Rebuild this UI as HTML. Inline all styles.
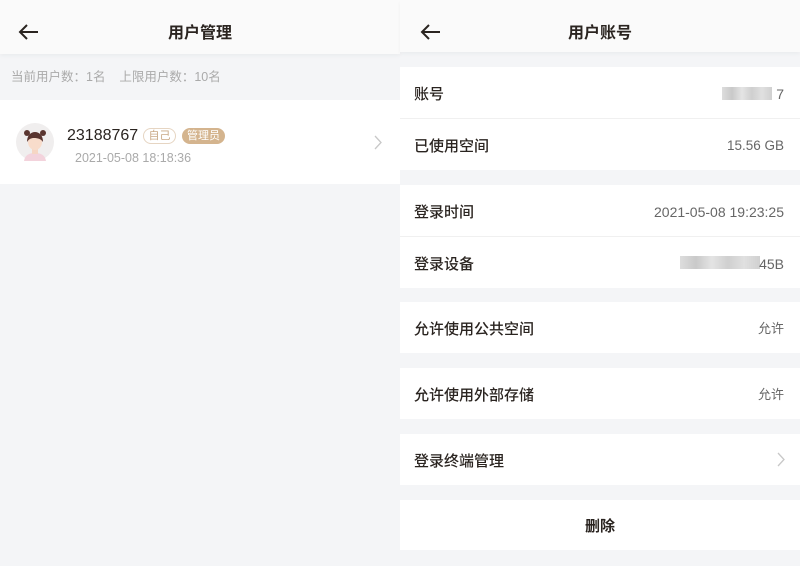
<!DOCTYPE html>
<html><head><meta charset="utf-8"><style>
*{margin:0;padding:0;box-sizing:border-box}
body{width:800px;height:566px;background:#f4f5f7;font-family:"Liberation Sans","Noto Sans CJK SC",sans-serif;position:relative;overflow:hidden;color:#2a2420}
.a{position:absolute;line-height:20px}
.w{position:absolute;background:#fff}
.t{position:absolute;font-size:15px;color:#2a2420;font-weight:500;line-height:20px}
.v{position:absolute;font-size:14px;color:#666;right:16px;line-height:20px}
.line{position:absolute;height:1px;background:#f0f0f0}
.blur{position:absolute;height:13px;background:linear-gradient(90deg,#ddd,#c9c9c9 20%,#e4e4e4 40%,#cfcfcf 60%,#e0e0e0 80%,#d0d0d0)}
</style></head><body>
<!-- left -->
<div class="w" style="left:0;top:0;width:400px;height:54px;background:#fafafa;box-shadow:0 2px 4px rgba(0,0,0,.04)"></div>
<svg class="a" style="left:18px;top:24px" width="22" height="16" viewBox="0 0 22 16"><path d="M20 8H2M9 1L2 8l7 7" fill="none" stroke="#2a2420" stroke-width="2"/></svg>
<div class="t" style="left:0;width:400px;text-align:center;top:24px;font-size:16px;font-weight:700">用户管理</div>
<div class="a" style="left:11px;top:67px;font-size:12.5px;color:#aaa">当前用户数：1名&nbsp;&nbsp;&nbsp;&nbsp;上限用户数：10名</div>
<div class="w" style="left:0;top:100px;width:400px;height:84px"></div>
<svg class="a" style="left:16px;top:123px" width="38" height="38" viewBox="0 0 38 38"><circle cx="19" cy="19" r="19" fill="#f0eeee"/><path d="M8 38c1-6 5-8 11-8s10 2 11 8z" fill="#f3d3dc"/><rect x="16" y="25" width="6" height="6" fill="#f6d6c4"/><ellipse cx="19" cy="19" rx="7" ry="8" fill="#f8dccb"/><path d="M11 19c0-7 4-10 8-10s8 3 8 10c-2-3-5-4-9-4-3 0-5 1-7 4z" fill="#5a3530"/><circle cx="11" cy="10" r="3" fill="#5a3530"/><circle cx="27" cy="10" r="3" fill="#5a3530"/></svg>
<div class="a" style="left:67px;top:126px;font-size:16px;font-weight:500">23188767</div>
<div class="a" style="left:143px;top:128px;width:33px;height:16px;border:1px solid #e6d5c2;border-radius:8px;font-size:11px;color:#c9a987;text-align:center;line-height:14px">自己</div>
<div class="a" style="left:182px;top:128px;width:43px;height:16px;background:#d4b48e;border-radius:8px;font-size:11px;color:#fff;text-align:center;line-height:16px">管理员</div>
<div class="a" style="left:75px;top:148px;font-size:12.5px;color:#aaa">2021-05-08 18:18:36</div>
<svg class="a" style="left:374px;top:135px" width="8" height="15" viewBox="0 0 8 15"><path d="M1 1l6 6.5L1 14" fill="none" stroke="#c8c8c8" stroke-width="1.3"/></svg>
<!-- right -->
<div class="w" style="left:400px;top:0;width:400px;height:52px;background:#fafafa;box-shadow:0 2px 4px rgba(0,0,0,.04)"></div>
<svg class="a" style="left:420px;top:24px" width="22" height="16" viewBox="0 0 22 16"><path d="M20 8H2M9 1L2 8l7 7" fill="none" stroke="#2a2420" stroke-width="2"/></svg>
<div class="t" style="left:400px;width:400px;text-align:center;top:24px;font-size:16px;font-weight:700">用户账号</div>
<div class="w" style="left:400px;top:67px;width:400px;height:103px"></div>
<div class="line" style="left:400px;top:118px;width:400px"></div>
<div class="t" style="left:414px;top:85px">账号</div>
<div class="blur" style="left:722px;top:87px;width:50px"></div><div class="v" style="top:84px">7</div>
<div class="t" style="left:414px;top:137px">已使用空间</div><div class="v" style="top:136px;font-size:13.5px">15.56 GB</div>
<div class="w" style="left:400px;top:185px;width:400px;height:103px"></div>
<div class="line" style="left:400px;top:236px;width:400px"></div>
<div class="t" style="left:414px;top:203px">登录时间</div><div class="v" style="top:202px">2021-05-08 19:23:25</div>
<div class="t" style="left:414px;top:255px">登录设备</div>
<div class="blur" style="left:680px;top:256px;width:80px"></div><div class="v" style="top:254px">45B</div>
<div class="w" style="left:400px;top:302px;width:400px;height:51px"></div>
<div class="t" style="left:414px;top:320px">允许使用公共空间</div><div class="v" style="top:319px;font-size:13px">允许</div>
<div class="w" style="left:400px;top:368px;width:400px;height:51px"></div>
<div class="t" style="left:414px;top:386px">允许使用外部存储</div><div class="v" style="top:385px;font-size:13px">允许</div>
<div class="w" style="left:400px;top:434px;width:400px;height:51px"></div>
<div class="t" style="left:414px;top:452px">登录终端管理</div>
<svg class="a" style="left:777px;top:452px" width="8" height="15" viewBox="0 0 8 15"><path d="M1 1l6 6.5L1 14" fill="none" stroke="#c8c8c8" stroke-width="1.3"/></svg>
<div class="w" style="left:400px;top:500px;width:400px;height:50px"></div>
<div class="t" style="left:400px;width:400px;text-align:center;top:517px;font-weight:700">删除</div>
</body></html>
